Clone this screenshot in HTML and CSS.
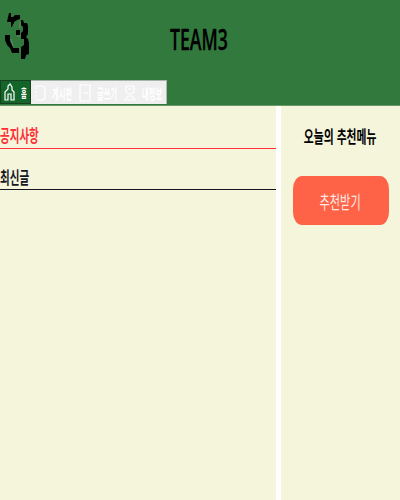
FILE: index.html
```html
<!DOCTYPE html>
<html lang="ko">
<head>
<meta charset="utf-8">
<title>TEAM3</title>
<link rel="stylesheet" href="styles.css">
</head>
<body>
<header class="header">
  <div class="brand">
    <svg class="logo" viewBox="0 0 36 56" aria-hidden="true">
      <path d="M9 5h2v4h2l2-2h5v4l-3 1-3 2-1 5h-2v-5H7l1-5z"/>
      <path d="M21 12h2l1 3h3l1 3v8l-2 3 2 2 1 4v11l-3 1-1 4h-4V39l3-2v-6h-3v-6l2-2v-4l-2-2z"/>
      <path d="M16 22h4v5h-4zM5 27h5v6l2 4 1 3h6v5h-7l-2-5-3-3-2-5z"/>
      <path class="logo-edge" d="M14 16l-2 3M20 14v6M17 28h4M11 31l2 7"/>
    </svg>
    <h1 class="title"><span>TEAM3</span></h1>
  </div>
  <nav class="nav">
    <button class="tab home"><svg viewBox="0 0 12 20"><path d="M2 18V10l3-3V4l2-2 2 3v3l2 2v8H8v-6H5v6z"/></svg><span>홈</span></button>
    <button class="tab"><svg viewBox="0 0 12 20"><path d="M2 3h7l2 2v10l-2 2H2M1 5h2M1 9h2M1 13h2"/></svg><span>게시판</span></button>
    <button class="tab"><svg viewBox="0 0 12 20"><path d="M1 2h10v16H1zM4 10h5"/></svg><span>글쓰기</span></button>
    <button class="tab"><svg viewBox="0 0 12 20"><path d="M2 3h8v6l-3 2H5L2 9zM4 6h4M1 17l3-4h4l3 4z"/></svg><span>내정보</span></button>
  </nav>
</header>
<main class="main">
  <section class="posts">
    <h2 class="heading notice"><span>공지사항</span></h2>
    <h2 class="heading recent"><span>최신글</span></h2>
  </section>
  <aside class="side">
    <h2 class="side-title"><span>오늘의 추천메뉴</span></h2>
    <button class="recommend"><span>추천받기</span></button>
  </aside>
</main>
</body>
</html>
```
FILE: styles.css
```css
* { box-sizing: border-box; }
body { margin: 0; height: 500px; display: flex; flex-direction: column; overflow: hidden; background: #fff; font-family: "Liberation Sans", "Noto Sans CJK KR", sans-serif; }
h1, h2 { margin: 0; }
button { border: 0; padding: 0; font: inherit; }
.header { height: 106px; background: #32793d; border-bottom: 1px solid #669b69; }
.brand { height: 80px; display: grid; grid-template-columns: 36px 1fr 38px; }
.logo { width: 36px; height: 56px; margin-top: 8px; }
.logo-edge { fill: none; stroke: #77927a; stroke-width: .7; }
.title { display: flex; justify-content: center; align-items: center; padding-bottom: 2px; font: 600 28px "Open Sans", sans-serif; }
.title span { transform: scaleX(.63); -webkit-text-stroke: .3px #000; }
.nav { display: flex; height: 24px; }
.tab { width: 45px; display: flex; align-items: center; background: #efefef; color: #fff; font-size: 14px; overflow: hidden; padding-left: 3px; border-top: 1px solid #a9b5aa; }
.tab:last-child { width: 46px; border-right: 1px solid #b5b5b5; }
.tab svg { width: 12px; height: 20px; flex: none; fill: none; stroke: #fff; stroke-width: 1.2; }
.tab span { white-space: nowrap; transform: scaleX(.52); transform-origin: left; margin-left: 6px; font-weight: 700; }
.tab.home { width: 31px; background: #14652a; border: 1px solid #173f1d; padding-left: 2px; }
.home span { font-size: 12px; }
.main { flex: 1; display: grid; grid-template-columns: 276px 119px; gap: 5px; }
.posts, .side { background: #f5f5dc; }
.heading { display: flex; align-items: flex-end; font-size: 17px; line-height: 22px; white-space: nowrap; border-bottom: 1px solid currentColor; }
.heading span { transform: scaleX(.62); transform-origin: left; }
.notice { height: 43px; color: #ff3038; }
.recent { height: 41px; line-height: 20px; color: #161622; }
.side { display: flex; flex-direction: column; align-items: center; padding-top: 20px; }
.side-title { font-size: 17px; line-height: 24px; white-space: nowrap; }
.side-title span { display: inline-block; transform: scaleX(.635); }
.recommend span { display: inline-block; transform: scaleX(.62); }
.recommend { width: 96px; height: 49px; margin-top: 26px; border-radius: 9px / 13px; background: #ff6347; color: #ffeae6; font-size: 18px; }
```
